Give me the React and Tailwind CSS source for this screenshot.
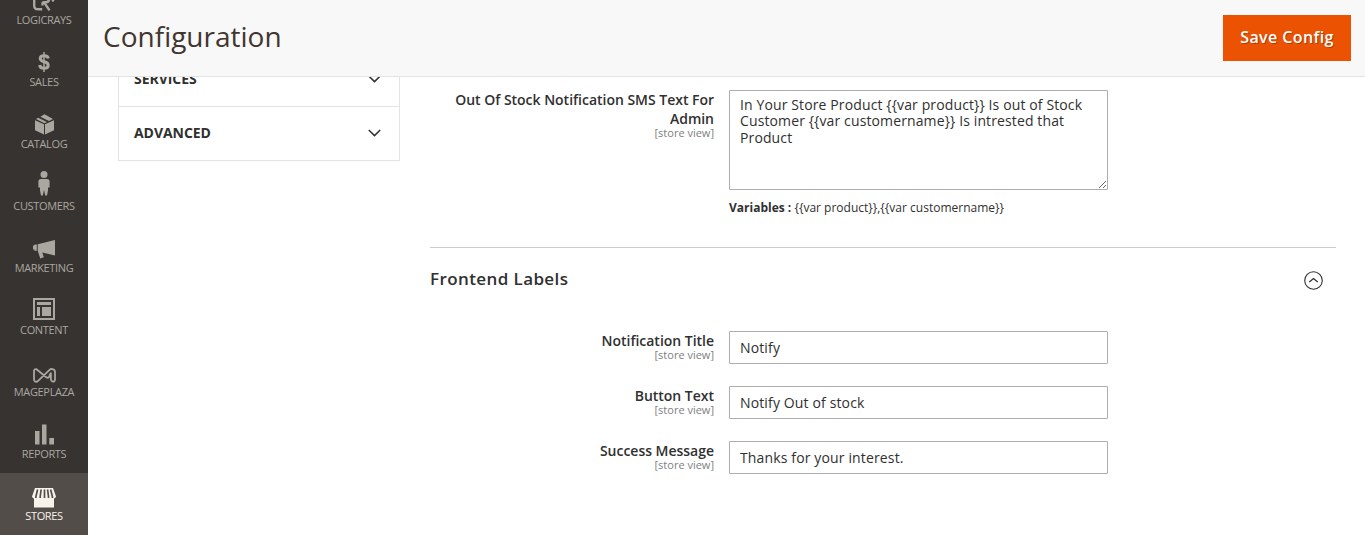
import React from "react";

const icons = {
  logicrays: (
    <svg className="w-[24px] h-[20px]" viewBox="0 0 24 20" fill="none" stroke="currentColor" strokeWidth="2.400">
      <path d="M2.200 0V14.500Q2.200 18.300 6 18.300H10.200" />
      <path d="M10.500 14.500V12.700Q10.500 11.300 12 11.300H13.500Q17.200 11.300 17.200 7.500V0M12.500 11.800L17.500 19.300" />
      <circle cx="21" cy="9.500" r="1.300" stroke="none" fill="currentColor" />
    </svg>
  ),
  sales: (
    <svg className="-mt-[1px] w-[12px] h-[20px]" viewBox="0 0 12 20" fill="none" stroke="currentColor">
      <path strokeWidth="3" d="M10.300 6.500C10 4.600 8.200 3.700 6.200 3.700C3.900 3.700 2.200 4.700 2.200 6.500C2.200 8.600 4.200 9.200 6.200 9.700C8.400 10.200 10.200 11 10.200 13.200C10.200 15.200 8.400 16.200 6 16.200C3.600 16.200 1.900 15.200 1.700 13" />
      <path strokeWidth="1.500" d="M6 0V20" />
    </svg>
  ),
  catalog: (
    <svg className="w-[19px] h-[21px]" viewBox="0 0 19 21" fill="currentColor">
      <path d="M0 6.300L9 10.300V20.500L0 16.300ZM10 10.300L19 6.300V16.300L10 20.500Z" />
      <path d="M1 5.100L3.200 3.800L11.900 8L9.500 9.200ZM5.300 2.700L9.500.3L18 5.100L14 7Z" />
    </svg>
  ),
  customers: (
    <svg className="-mt-[6px] w-[12px] h-[25px]" viewBox="0 0 12 25" fill="currentColor">
      <circle cx="6" cy="3.600" r="3.500" />
      <path d="M3 8H9Q11.600 8 11.600 10.500V16.500H10V19.500L9 24.500H7.200L6 19L4.800 24.500H3L2 19.500V16.500H.4V10.500Q.4 8 3 8Z" />
    </svg>
  ),
  marketing: (
    <svg className="mt-[2px] w-[22px] h-[19px]" viewBox="0 0 22 19" fill="currentColor">
      <path d="M22 0V15.500L9.300 12.600L10.800 17.200L7.300 18.500L4.700 10.800V4.300ZM3.800 4.500V10.700H1.400V9.500H0V5.500H1.400V4.500Z" />
    </svg>
  ),
  content: (
    <svg className="-mt-[3px] w-[22px] h-[22px]" viewBox="0 0 22 22" fill="currentColor">
      <path fillRule="evenodd" d="M0 0H22V22H0ZM2 2V20H20V2ZM4 4H18V7H4ZM4 9H7V18H4ZM9 9H18V18H9Z" />
    </svg>
  ),
  mageplaza: (
    <svg className="mt-[6px] w-[23px] h-[15px]" viewBox="0 0 23 15" fill="none" stroke="currentColor" strokeWidth="1.800" strokeLinejoin="round">
      <path d="M1 11.500V3Q1 .9 3.500 1.200L13.300 9.200Q15.200 10.500 16.200 8.800L17.300 5.500M1 11.500Q1.300 14.300 4.300 13.600L16.800 1.600Q18 .7 19.500 1.200Q22 1.900 22 4V11.500Q21.700 14 19.700 13.500Q17.900 13.200 17.900 11.200V4.500" />
    </svg>
  ),
  reports: (
    <svg className="-mt-[1px] w-[19px] h-[21px]" viewBox="0 0 19 21" fill="currentColor">
      <path d="M0 7H4.500V20.500H0ZM7 .5H11.500V20.500H7ZM14.300 14H19V20.500H14.300Z" />
    </svg>
  ),
  stores: (
    <svg className="mt-[3px] w-[24px] h-[20px]" viewBox="0 0 24 20" fill="currentColor">
      <path d="M3 0H21L24 8.500Q23.300 10.500 22 10.500V19.500H2V10.500Q.7 10.500 0 8.500Z" />
      <path stroke="#524d49" strokeWidth="1.700" d="M5.600 1.500L3.900 8.500V10M9.100 1.500L8.200 8.500V10M12.500 1.500V10M15.600 1.500L16.500 8.500V10M18.600 1.500L20.400 8.500V10" />
    </svg>
  ),
};

const menu = [
  ["logicrays", "Logicrays"],
  ["sales", "Sales"],
  ["catalog", "Catalog"],
  ["customers", "Customers"],
  ["marketing", "Marketing"],
  ["content", "Content"],
  ["mageplaza", "Mageplaza"],
  ["reports", "Reports"],
  ["stores", "Stores"],
];

function Sidebar() {
  return (
    <nav className="flex h-full w-[88px] shrink-0 flex-col justify-end overflow-hidden bg-[#373330]">
      {menu.map(([id, label]) => (
        <a
          key={id}
          className={
            "flex h-[62px] shrink-0 flex-col items-center text-[11px] leading-[14px] tracking-[-0.35px] uppercase " +
            (id === "stores" ? "bg-[#524d49] text-[#f7f3eb]" : "text-[#aaa6a0]")
          }
        >
          <span className="mt-[11px] flex h-[25px] items-center justify-center">{icons[id]}</span>
          <span>{label}</span>
        </a>
      ))}
    </nav>
  );
}

function Section({ label }) {
  return (
    <div className="flex h-[54px] items-center justify-between border border-t-0 border-[#e3e3e3] pr-[18px] pb-px pl-[15px] text-[14px] leading-[20px] font-bold uppercase">
      <span className="tracking-[-0.05px]">{label}</span>
      <svg className="h-[8px] w-[13px]" viewBox="0 0 13 8" fill="none" stroke="currentColor" strokeWidth="1.500">
        <path d="M.8 1L6.500 6.600L12.200 1" />
      </svg>
    </div>
  );
}

function Label({ children }) {
  return (
    <div className="w-[284px] shrink-0 text-right">
      <div className="text-[14px] leading-[19px] font-semibold tracking-[-0.02px]">{children}</div>
      <div className="text-[11px] leading-[10px] text-[#808080]">[store view]</div>
    </div>
  );
}

function Field({ label, value }) {
  return (
    <div className="flex h-[33px] gap-[15px]">
      <Label>{label}</Label>
      <input
        className="h-[33px] w-[379px] rounded-[1px] border border-[#adadad] px-[10px] text-[14px] tracking-[0.14px] outline-none"
        defaultValue={value}
      />
    </div>
  );
}

export default function App() {
  return (
    <div className="flex h-[535px] w-[1365px] overflow-hidden bg-white font-['Open_Sans',sans-serif] text-[#303030]">
      <Sidebar />
      <div className="flex min-w-0 flex-1 flex-col">
        <header className="flex h-[77px] shrink-0 items-center justify-between border-b border-[#e3e3e3] bg-[#f8f8f8] pr-[14px] pl-[15px]">
          <h1 className="pb-[5px] text-[28px] leading-[34px] text-[#41362f]">Configuration</h1>
          <button className="h-[46px] w-[128px] bg-[#eb5202] pb-[2px] text-[16px] font-semibold tracking-[0.4px] text-white [text-shadow:1px_1px_0_rgba(0,0,0,0.25)]">
            Save Config
          </button>
        </header>
        <div className="flex min-h-0 flex-1 gap-[30px] overflow-hidden pr-[29px] pl-[30px]">
          <aside className="-mt-[24px] w-[282px] shrink-0">
            <Section label="Services" />
            <Section label="Advanced" />
          </aside>
          <main className="flex-1">
            <div className="flex gap-[15px] pt-[13px]">
              <Label>Out Of Stock Notification SMS Text For Admin</Label>
              <div>
                <textarea
                  className="block h-[100px] w-[379px] resize rounded-[1px] border border-[#adadad] px-[10px] py-[6px] text-[14px] leading-[16.4px] tracking-[0.12px] outline-none"
                  defaultValue="In Your Store Product {{var product}} Is out of Stock Customer {{var customername}} Is intrested that Product"
                />
                <p className="mt-[9px] text-[12px] leading-[17px]">
                  <b>Variables :</b> {"{{var product}},{{var customername}}"}
                </p>
              </div>
            </div>
            <section className="mt-[31px] border-t border-[#cccccc]">
              <div className="flex h-[64px] items-center justify-between pr-[13px]">
                <h2 className="pb-[2px] text-[17px] font-semibold tracking-[0.4px]">Frontend Labels</h2>
                <svg className="h-[19px] w-[19px]" viewBox="0 0 19 19" fill="none" stroke="currentColor">
                  <circle cx="9.500" cy="9.500" r="8.800" strokeWidth="1.100" />
                  <path d="M5.300 11L9.500 7.500L13.700 11" strokeWidth="1.300" />
                </svg>
              </div>
              <div className="flex flex-col gap-[22px] pt-[19px]">
                <Field label="Notification Title" value="Notify" />
                <Field label="Button Text" value="Notify Out of stock" />
                <Field label="Success Message" value="Thanks for your interest." />
              </div>
            </section>
          </main>
        </div>
      </div>
    </div>
  );
}
